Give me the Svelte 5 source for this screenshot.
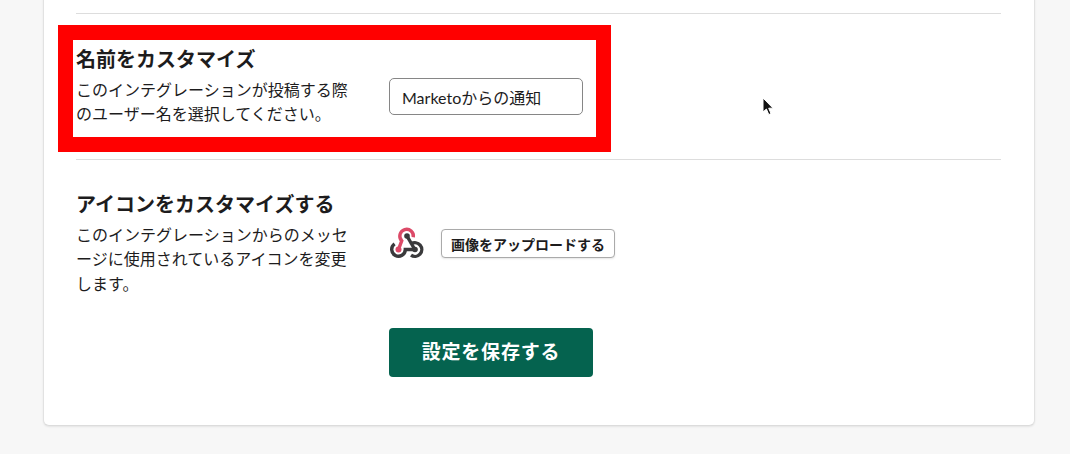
<script lang="ts">
	let name = $state('Marketoからの通知');
</script>

<main class="page">
	<section class="card">
		<div class="row row-name">
			<div class="copy">
				<h3>名前をカスタマイズ</h3>
				<p>このインテグレーションが投稿する際のユーザー名を選択してください。</p>
			</div>
			<div class="control control-name">
				<input type="text" bind:value={name} />
			</div>
			<div class="highlight"></div>
		</div>

		<div class="row row-icon">
			<div class="copy">
				<h3>アイコンをカスタマイズする</h3>
				<p>このインテグレーションからのメッセージに使用されているアイコンを変更します。</p>
			</div>
			<div class="control control-icon">
				<svg class="hook" width="36" height="34" viewBox="0 0 36 34" fill="none" stroke-width="3.4">
					<path d="M9.5 23.5 12.7 14.8A6.8 6.8 0 1 1 24.3 11.3" stroke="#dc4a68" />
					<path d="M18 10 25.5 23" stroke="#3a3a3c" />
					<path d="M5.6 17.9A6.8 6.8 0 1 0 16.3 23.5H26" stroke="#3a3a3c" />
					<path d="M22.2 17.9A6.8 6.8 0 1 1 22 29.1" stroke="#3a3a3c" />
					<circle cx="18" cy="10" r="2.8" fill="#3a3a3c" />
					<circle cx="9.5" cy="23.5" r="3" fill="#dc4a68" />
					<circle cx="26" cy="23.5" r="2.8" fill="#3a3a3c" />
				</svg>
				<button class="upload" type="button">画像をアップロードする</button>
			</div>
		</div>

		<div class="actions">
			<button class="save" type="button">設定を保存する</button>
		</div>
	</section>

	<svg class="cursor" width="14" height="20" viewBox="0 0 14 20">
		<path d="M1 1V15L4.4 12 6.8 17.6 9 16.6 6.7 11.2H11Z" fill="#111" stroke="#fff" stroke-width="1" />
	</svg>
</main>

<style>
	:global(body) {
		margin: 0;
		background: #f7f7f7;
	}
	.page {
		position: relative;
		height: 454px;
		overflow: hidden;
		font-family: Lato, 'Noto Sans CJK JP', sans-serif;
		color: #1d1c1d;
	}
	.card {
		box-sizing: border-box;
		width: 992px;
		height: 447px;
		margin: -21px 0 0 43px;
		padding: 33px 33px 48px 32px;
		background: #fff;
		border: 1px solid #e2e2e2;
		border-bottom-color: #dcdcdc;
		border-radius: 6px;
		box-shadow: 0 1px 2px rgba(0, 0, 0, 0.08);
	}
	.row {
		position: relative;
		display: grid;
		grid-template-columns: 273px 1fr;
		column-gap: 40px;
		border-top: 1px solid #dddddd;
	}
	.row-name {
		height: 146px;
		box-sizing: border-box;
		padding-top: 32px;
	}
	.row-icon {
		height: 169px;
		box-sizing: border-box;
		padding-top: 31px;
	}
	h3 {
		margin: 0 0 6px;
		font-size: 20px;
		line-height: 26px;
		font-weight: 700;
	}
	p {
		margin: 0;
		font-size: 16px;
		line-height: 24.4px;
		line-break: strict;
	}
	.control-name {
		padding-top: 32px;
	}
	.control-icon {
		display: flex;
		align-items: flex-start;
		gap: 16px;
		padding-top: 38px;
	}
	input {
		box-sizing: border-box;
		display: block;
		width: 194px;
		height: 37px;
		padding: 0 12px;
		font: inherit;
		font-size: 16px;
		color: #1d1c1d;
		background: #fff;
		border: 1px solid #868686;
		border-radius: 5px;
		outline: none;
	}
	.hook {
		flex: none;
		margin-top: -3px;
	}
	.upload {
		box-sizing: border-box;
		height: 29px;
		padding: 0 9px;
		font: inherit;
		font-size: 14px;
		font-weight: 700;
		color: #1d1c1d;
		background: #fff;
		border: 1px solid #aaaaaa;
		border-radius: 4px;
		box-shadow: 0 1px 2px rgba(0, 0, 0, 0.1);
	}
	.actions {
		padding-left: 313px;
	}
	.save {
		box-sizing: border-box;
		width: 204px;
		height: 49px;
		padding: 0 0 4px;
		font: inherit;
		font-size: 19px;
		font-weight: 700;
		letter-spacing: 0.8px;
		color: #fff;
		background: #05634f;
		border: none;
		border-radius: 4px;
	}
	.highlight {
		position: absolute;
		left: -18px;
		top: 11px;
		box-sizing: border-box;
		width: 553px;
		height: 127px;
		border: 15px solid #ff0000;
		pointer-events: none;
	}
	.cursor {
		position: absolute;
		left: 762px;
		top: 97px;
	}
</style>
